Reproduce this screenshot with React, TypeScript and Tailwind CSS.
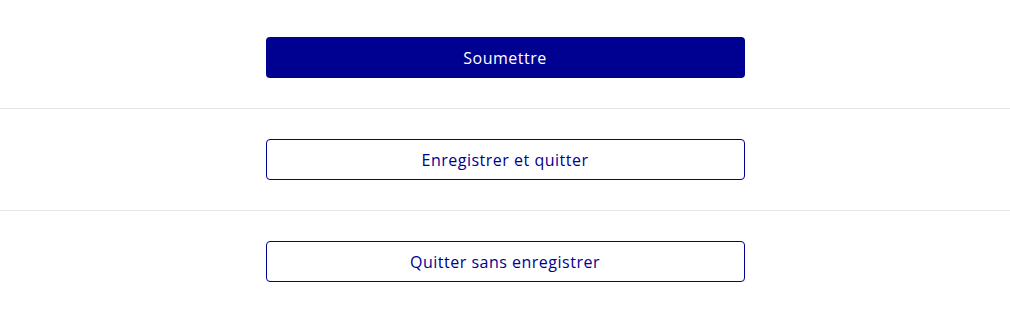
export default function App() {
  const font = { fontFamily: '"Open Sans", "Noto Sans", sans-serif' };
  return (
    <div className="min-h-screen bg-white pt-[7px]" style={font}>
      <div className="flex justify-center pt-[30px] pb-[30px]">
        <button className="flex h-[41px] w-[479px] items-center justify-center rounded-[4px] bg-[#000091] text-[16px] tracking-[0.5px] text-white">
          Soumettre
        </button>
      </div>
      <div className="h-px bg-[#e5e5e5]" />
      <div className="flex justify-center py-[30px]">
        <button className="flex h-[41px] w-[479px] items-center justify-center rounded-[4px] border border-[#000091] bg-white text-[16px] tracking-[0.5px] text-[#000091]">
          Enregistrer et quitter
        </button>
      </div>
      <div className="h-px bg-[#e5e5e5]" />
      <div className="flex justify-center py-[30px]">
        <button className="flex h-[41px] w-[479px] items-center justify-center rounded-[4px] border border-[#000091] bg-white text-[16px] tracking-[0.5px] text-[#000091]">
          Quitter sans enregistrer
        </button>
      </div>
    </div>
  );
}
